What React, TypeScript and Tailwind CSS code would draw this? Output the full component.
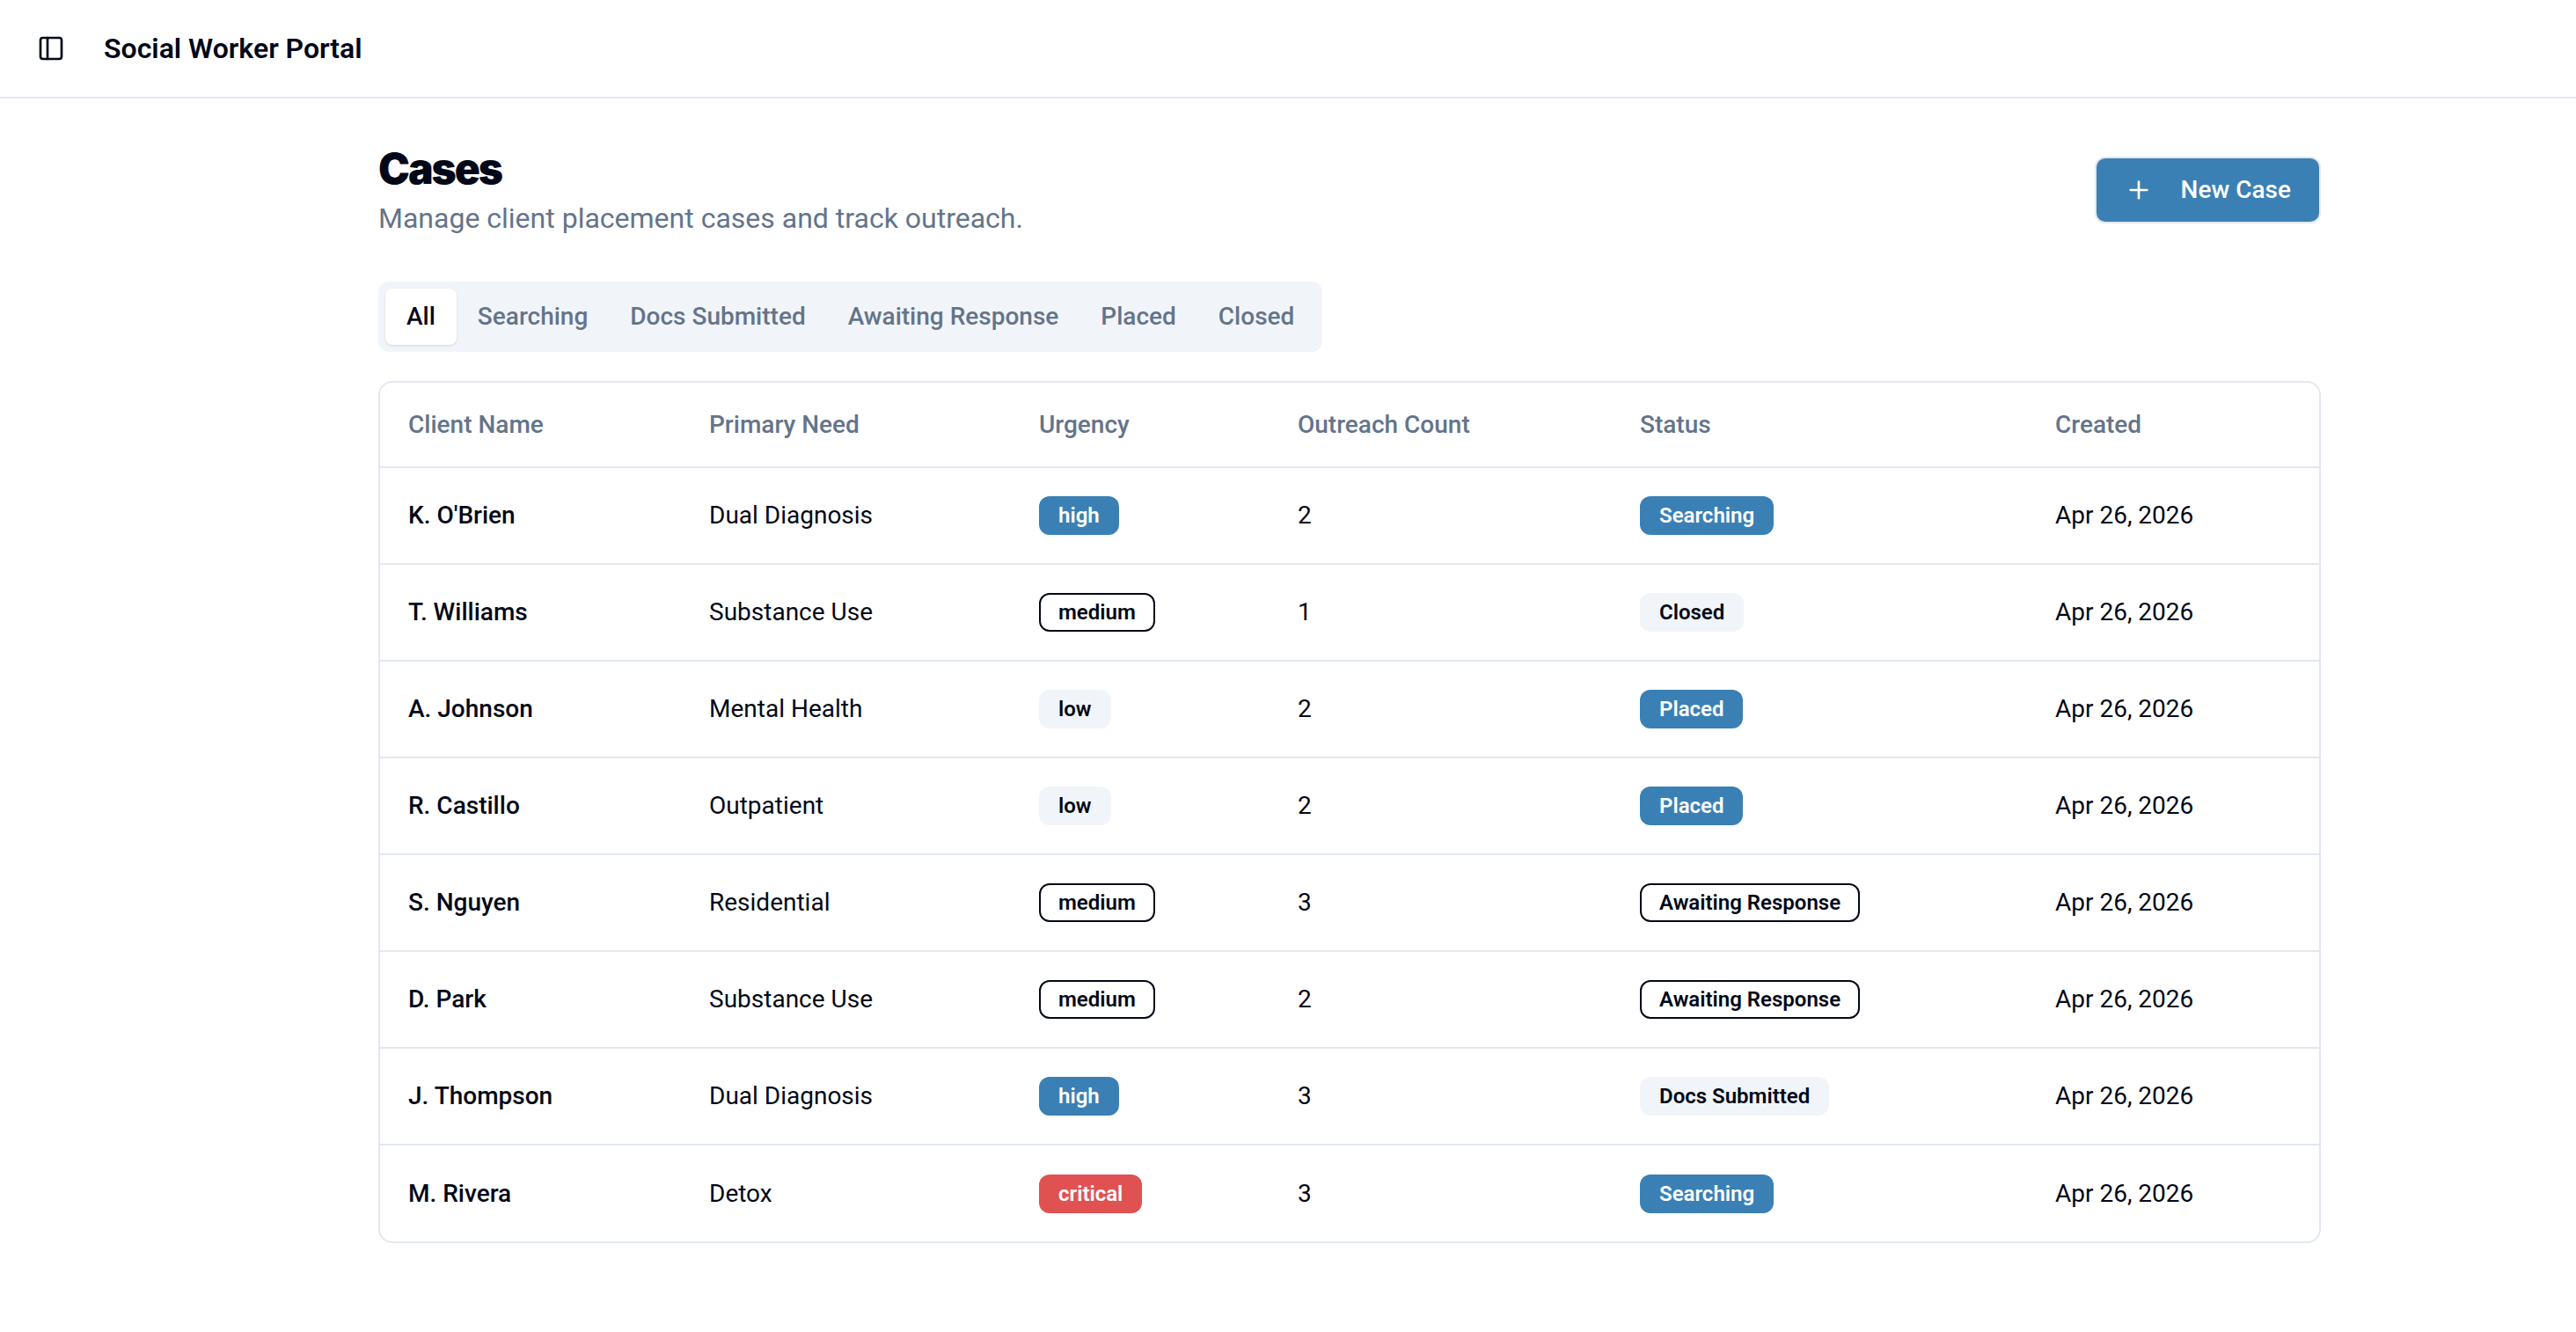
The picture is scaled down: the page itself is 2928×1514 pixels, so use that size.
import { PanelLeft, Plus } from 'lucide-react';

type Tone = 'blue' | 'outline' | 'soft' | 'red';

const tabs = ['All', 'Searching', 'Docs Submitted', 'Awaiting Response', 'Placed', 'Closed'];

const urgencyTone: Record<string, Tone> = {
  critical: 'red',
  high: 'blue',
  medium: 'outline',
  low: 'soft',
};

const statusTone: Record<string, Tone> = {
  Searching: 'blue',
  Placed: 'blue',
  'Awaiting Response': 'outline',
  'Docs Submitted': 'soft',
  Closed: 'soft',
};

const cases = [
  { name: "K. O'Brien", need: 'Dual Diagnosis', urgency: 'high', count: 2, status: 'Searching' },
  { name: 'T. Williams', need: 'Substance Use', urgency: 'medium', count: 1, status: 'Closed' },
  { name: 'A. Johnson', need: 'Mental Health', urgency: 'low', count: 2, status: 'Placed' },
  { name: 'R. Castillo', need: 'Outpatient', urgency: 'low', count: 2, status: 'Placed' },
  { name: 'S. Nguyen', need: 'Residential', urgency: 'medium', count: 3, status: 'Awaiting Response' },
  { name: 'D. Park', need: 'Substance Use', urgency: 'medium', count: 2, status: 'Awaiting Response' },
  { name: 'J. Thompson', need: 'Dual Diagnosis', urgency: 'high', count: 3, status: 'Docs Submitted' },
  { name: 'M. Rivera', need: 'Detox', urgency: 'critical', count: 3, status: 'Searching' },
];

const toneClasses: Record<Tone, string> = {
  blue: 'border-transparent bg-[#3a80b4] text-white',
  outline: 'border-[#020817] bg-white text-[#020817]',
  soft: 'border-transparent bg-[#f1f5f9] text-[#020817]',
  red: 'border-transparent bg-[#e05252] text-white',
};

function Badge({ label, tone }: { label: string; tone: Tone }) {
  return (
    <span className={`inline-flex items-center rounded-[12px] border-2 px-[20px] py-[4px] text-[24px] leading-[32px] font-semibold ${toneClasses[tone]}`}>
      {label}
    </span>
  );
}

export default function App() {
  return (
    <div className="min-h-screen bg-white font-['Roboto',sans-serif] text-[#020817]">
      {/* Header */}
      <header className="flex h-[112px] items-center border-b-2 border-[#e2e8f0] pl-[42px]">
        <PanelLeft className="h-[32px] w-[32px]" strokeWidth={2} />
        <span className="ml-[44px] text-[32px] font-semibold">Social Worker Portal</span>
      </header>

      <main className="pt-[48px] pr-[290px] pl-[430px]">
        {/* Title row */}
        <div className="flex items-start justify-between">
          <div>
            <h1 className="font-['Inter',sans-serif] text-[48px] leading-[64px] font-black tracking-[-2px]">Cases</h1>
            <p className="mt-[4px] text-[32px] leading-[40px] text-[#64748b]">Manage client placement cases and track outreach.</p>
          </div>
          <button className="mt-[18px] flex h-[76px] items-center gap-[32px] rounded-[12px] border-2 border-[#e2e8f0] bg-[#3a80b4] px-[32px] text-[28px] font-medium text-white">
            <Plus className="h-[32px] w-[32px]" strokeWidth={2} />
            New Case
          </button>
        </div>

        {/* Status tabs */}
        <div className="mt-[52px] inline-flex h-[80px] items-center rounded-[12px] bg-[#f1f5f9] p-[8px]">
          {tabs.map((tab, i) => (
            <button
              key={tab}
              className={`h-[64px] rounded-[8px] px-[24px] text-[28px] font-medium ${i === 0 ? 'bg-white text-[#020817] shadow-sm' : 'text-[#64748b]'}`}
            >
              {tab}
            </button>
          ))}
        </div>

        {/* Cases table */}
        <div className="mt-[33px] overflow-hidden rounded-[16px] border-2 border-[#e2e8f0]">
          <table className="w-full table-fixed border-collapse text-[28px]">
            <colgroup>
              <col className="w-[342px]" />
              <col className="w-[375px]" />
              <col className="w-[294px]" />
              <col className="w-[389px]" />
              <col className="w-[472px]" />
              <col className="w-[332px]" />
            </colgroup>
            <thead>
              <tr className="h-[96px] border-b-2 border-[#e2e8f0] text-left text-[#64748b]">
                <th className="px-[32px] font-medium">Client Name</th>
                <th className="px-[32px] font-medium">Primary Need</th>
                <th className="px-[32px] font-medium">Urgency</th>
                <th className="px-[32px] font-medium">Outreach Count</th>
                <th className="px-[32px] font-medium">Status</th>
                <th className="px-[32px] font-medium">Created</th>
              </tr>
            </thead>
            <tbody>
              {cases.map((c, i) => (
                <tr key={c.name} className={`h-[110px] ${i < cases.length - 1 ? 'border-b-2 border-[#e2e8f0]' : ''}`}>
                  <td className="px-[32px] font-medium">{c.name}</td>
                  <td className="px-[32px]">{c.need}</td>
                  <td className="px-[32px]"><Badge label={c.urgency} tone={urgencyTone[c.urgency]} /></td>
                  <td className="px-[32px]">{c.count}</td>
                  <td className="px-[32px]"><Badge label={c.status} tone={statusTone[c.status]} /></td>
                  <td className="px-[32px]">Apr 26, 2026</td>
                </tr>
              ))}
            </tbody>
          </table>
        </div>
      </main>
    </div>
  );
}
